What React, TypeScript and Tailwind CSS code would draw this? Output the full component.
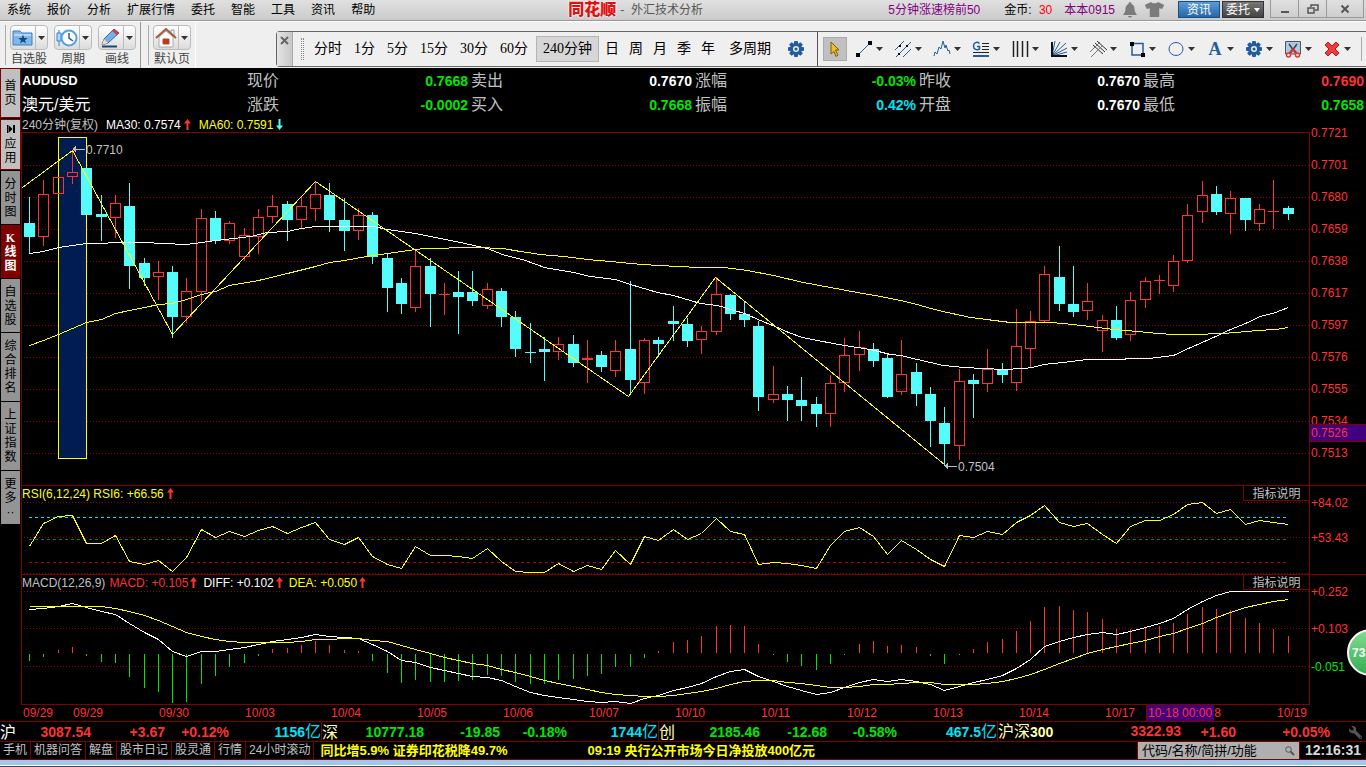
import type { ReactNode } from 'react';
import { FaTshirt, FaWrench } from 'react-icons/fa';

type Candle = [up: number, high: number, top: number, bottom: number, low: number];

// one entry per 4h bar
const candles: Candle[] = [
  [0, 64, 90, 104, 121], [1, 47, 61, 104, 113], [1, 44, 44, 61, 61], [1, 17, 39, 44, 51],
  [0, 35, 35, 82, 82], [0, 62, 81, 84, 108], [1, 62, 70, 85, 105], [0, 50, 73, 133, 156],
  [0, 125, 130, 145, 153], [1, 128, 139, 144, 167], [0, 133, 139, 184, 205], [1, 145, 158, 184, 190],
  [1, 76, 85, 159, 170], [0, 78, 85, 108, 111], [1, 88, 90, 108, 111], [1, 95, 102, 124, 128],
  [1, 76, 84, 104, 121], [1, 62, 73, 84, 90], [0, 68, 71, 87, 108], [1, 64, 73, 87, 95],
  [1, 48, 61, 76, 88], [0, 50, 62, 87, 99], [0, 65, 87, 98, 118], [1, 75, 82, 98, 107],
  [0, 79, 82, 124, 131], [0, 121, 125, 155, 179], [0, 145, 150, 171, 181], [1, 118, 133, 175, 179],
  [0, 125, 133, 161, 194], [1, 150, 161, 162, 182], [0, 138, 159, 164, 201], [0, 138, 159, 168, 173],
  [1, 150, 156, 173, 176], [0, 155, 158, 184, 194], [0, 178, 184, 216, 224], [0, 190, 219, 220, 230],
  [0, 204, 216, 219, 248], [1, 204, 211, 219, 227], [0, 202, 211, 230, 234], [1, 207, 225, 227, 250],
  [0, 218, 222, 234, 239], [1, 207, 218, 238, 244], [0, 148, 216, 247, 262], [1, 205, 207, 250, 261],
  [0, 204, 207, 211, 224], [0, 173, 188, 191, 208], [0, 185, 191, 208, 214], [1, 193, 198, 207, 221],
  [1, 144, 161, 199, 202], [0, 161, 162, 181, 187], [0, 168, 181, 187, 194], [0, 188, 193, 264, 278],
  [1, 233, 261, 267, 270], [0, 253, 261, 267, 288], [0, 244, 267, 273, 288], [0, 264, 271, 281, 294],
  [1, 242, 250, 281, 294], [1, 205, 222, 250, 259], [1, 198, 214, 222, 238], [0, 210, 216, 228, 234],
  [0, 221, 225, 264, 265], [1, 207, 241, 259, 262], [0, 230, 239, 261, 273], [0, 254, 261, 288, 314],
  [0, 274, 290, 311, 333], [1, 236, 248, 313, 327], [0, 241, 247, 251, 285], [1, 216, 236, 251, 259],
  [0, 230, 236, 242, 250], [1, 176, 213, 250, 258], [1, 178, 188, 216, 234], [1, 133, 141, 188, 189],
  [0, 113, 144, 171, 178], [0, 133, 171, 179, 184], [1, 150, 168, 178, 187], [1, 182, 187, 198, 219],
  [0, 173, 187, 205, 207], [1, 159, 167, 202, 208], [1, 144, 148, 167, 175], [1, 142, 147, 148, 161],
  [1, 122, 128, 153, 159], [1, 71, 82, 128, 130], [1, 48, 62, 79, 90], [0, 53, 61, 79, 82],
  [1, 58, 65, 81, 101], [0, 65, 65, 87, 98], [1, 71, 76, 91, 98], [1, 47, 78, 79, 96], [0, 73, 75, 81, 87],
];

const ma30 =
  '7,120 21,118 36,114 50,112 64,110 79,110 93,109 122,109 141,110 164,111 179,109 193,107 211,105 228,103 245,99 265,98 279,95 293,93 351,93 365,96 393,100 418,105 438,109 465,115 480,121 503,127 522,134 551,139 568,143 593,146 608,151 635,159 651,162 678,170 695,172 722,180 738,187 755,194 766,199 780,204 795,207 811,210 828,213 848,216 868,221 878,222 895,226 921,232 941,234 961,235 981,236 1001,235 1010,234 1021,231 1041,229 1065,226 1100,226 1106,225 1126,225 1151,222 1166,215 1191,204 1208,196 1223,190 1238,183 1253,179 1266,174';
const ma60 =
  '7,212 21,207 36,201 50,195 64,189 79,186 93,180 107,177 122,174 136,171 150,170 164,166 179,161 193,158 207,152 236,147 265,140 293,133 307,129 322,127 350,122 365,120 379,118 401,115 418,115 435,114 455,114 480,115 498,118 518,121 541,123 565,126 588,128 608,130 635,132 658,133 675,134 701,134 725,137 751,142 781,149 808,154 835,159 858,163 878,167 895,171 908,175 925,179 948,184 988,189 1028,189 1041,190 1068,193 1091,196 1115,198 1135,200 1151,201 1171,201 1201,200 1225,198 1235,197 1253,196 1266,194';
const zigzag = '0,54 50,17 150,201 293,48 606,263 693,144 922,331';

const rsi = [
  60, 37, 30, 29, 57, 57, 49, 75, 78, 74, 85, 71, 43, 51, 45, 50, 44, 40, 47, 41, 36, 53, 58, 51, 70, 78, 82, 60, 69, 69,
  70, 72, 62, 75, 85, 86, 86, 77, 85, 79, 83, 64, 78, 50, 54, 43, 53, 47, 32, 45, 48, 78, 76, 77, 79, 82, 59, 45, 41, 50,
  68, 54, 63, 73, 80, 49, 51, 45, 48, 36, 29, 19, 36, 40, 37, 48, 57, 40, 34, 34, 28, 18, 16, 27, 23, 38, 34, 36, 38,
];
const macd = [
  86, 82, 75, 72, 81, 87, 88, 102, 113, 117, 128, 127, 109, 101, 92, 88, 81, 74, 73, 70, 66, 70, 75, 76, 86, 98, 108, 105,
  107, 107, 106, 105, 100, 101, 107, 109, 109, 105, 104, 101, 99, 92, 92, 83, 76, 67, 65, 61, 51, 50, 51, 69, 80, 87, 91,
  95, 89, 80, 69, 66, 71, 70, 72, 81, 89, 80, 74, 67, 64, 56, 46, 32, 31, 35, 37, 44, 54, 54, 52, 51, 48, 39, 32, 34, 35,
  43, 48, 54, 61,
];
const diff = [
  34, 33, 31, 28, 32, 36, 39, 48, 57, 64, 76, 81, 76, 76, 74, 72, 69, 66, 64, 62, 59, 61, 62, 63, 69, 76, 85, 87, 92, 95,
  98, 101, 102, 105, 111, 117, 120, 122, 124, 126, 127, 126, 128, 123, 120, 115, 112, 108, 101, 96, 94, 101, 106, 111,
  115, 119, 117, 112, 107, 104, 106, 104, 106, 109, 115, 111, 107, 104, 100, 93, 84, 71, 66, 62, 59, 57, 59, 56, 52, 48,
  43, 34, 26, 20, 16, 16, 16, 16, 16,
];
const dea = [
  31, 31, 31, 31, 31, 31, 33, 36, 40, 45, 51, 57, 61, 64, 66, 67, 67, 67, 67, 66, 64, 64, 63, 63, 65, 66, 70, 74, 78, 82,
  85, 88, 90, 94, 97, 101, 105, 108, 111, 114, 117, 119, 120, 121, 121, 120, 118, 116, 113, 109, 106, 105, 105, 107, 108,
  110, 112, 112, 111, 109, 109, 108, 107, 107, 109, 109, 109, 108, 106, 103, 99, 94, 88, 83, 78, 74, 71, 68, 65, 61, 58,
  53, 48, 42, 37, 32, 29, 26, 24,
];

const barX = (i: number) => Math.floor((76 + 143 * i) / 10);
const toPoints = (ys: number[]) => ys.map((y, i) => `${barX(i)},${y}`).join(' ');

const menus = ['系统', '报价', '分析', '扩展行情', '委托', '智能', '工具', '资讯', '帮助'];
const minutes = ['分时', '1分', '5分', '15分', '30分', '60分'];
const longPeriods = ['日', '周', '月', '季', '年'];
const prices = ['0.7721', '0.7701', '0.7680', '0.7659', '0.7638', '0.7617', '0.7597', '0.7576', '0.7555', '0.7534', '0.7513'];
const dates = ['09/29', '09/29', '09/30', '10/03', '10/04', '10/05', '10/06', '10/07', '10/10', '10/11', '10/12', '10/13', '10/14', '10/17', '10/18', '10/19'];

const sideTabs = [
  { text: '分时图', cls: 'h-[53px] bg-[#949494] text-black' },
  { text: 'K线图', cls: "h-[53px] bg-[#800000] font-['Liberation_Serif','Noto_Sans_CJK_SC',serif] font-bold text-white" },
  { text: '自选股', cls: 'h-[53px] bg-[#949494] text-black' },
  { text: '综合排名', cls: 'h-[68px] bg-[#949494] text-black' },
  { text: '上证指数', cls: 'h-[68px] bg-[#949494] text-black' },
  { text: '更多··', cls: 'h-[53px] bg-[#949494] text-black' },
];

const quotes = [
  [
    { label: '现价', value: '0.7668', cls: 'text-[#00e600]' },
    { label: '卖出', value: '0.7670', cls: 'text-white' },
    { label: '涨幅', value: '-0.03%', cls: 'text-[#00e600]' },
    { label: '昨收', value: '0.7670', cls: 'text-white' },
    { label: '最高', value: '0.7690', cls: 'text-[#ff3232]' },
  ],
  [
    { label: '涨跌', value: '-0.0002', cls: 'text-[#00e600]' },
    { label: '买入', value: '0.7668', cls: 'text-[#00e600]' },
    { label: '振幅', value: '0.42%', cls: 'text-[#02e2f4]' },
    { label: '开盘', value: '0.7670', cls: 'text-white' },
    { label: '最低', value: '0.7658', cls: 'text-[#00e600]' },
  ],
];

const bottomTabs = ['手机', '机器问答', '解盘', '股市日记', '股灵通', '行情', '24小时滚动'];

function Arrow({ down }: { down?: boolean }) {
  return (
    <svg width="7" height="11" viewBox="0 0 7 11" className={down ? 'rotate-180' : ''} aria-hidden="true">
      <path d="M3.5 0 L7 4.5 H4.5 V11 H2.5 V4.5 H0 Z" fill={down ? '#54fcfc' : '#ff3232'} />
    </svg>
  );
}

function Caret() {
  return (
    <svg width="7" height="4" viewBox="0 0 7 4" aria-hidden="true">
      <path d="M0 0 H7 L3.5 4 Z" fill="#333" />
    </svg>
  );
}

function Gear() {
  return (
    <svg width="18" height="18" viewBox="-9 -9 18 18" aria-hidden="true">
      <g fill="#235c9c">
        {[0, 45, 90, 135].map((a) => (
          <rect key={a} x="-2" y="-8" width="4" height="16" rx="1" transform={`rotate(${a})`} />
        ))}
        <circle r="6" />
      </g>
      <circle r="3" fill="#f0f0f0" />
      <circle r="1.6" fill="#235c9c" />
    </svg>
  );
}

const blue = '#235c9c';

const tools: { name: string; icon: ReactNode }[] = [
  {
    name: '线段',
    icon: (
      <>
        <path d="M3 15 L15 3" stroke={blue} />
        <path d="M1 13 h4 v4 h-4z M13 1 h4 v4 h-4z" fill="#000" stroke="none" />
      </>
    ),
  },
  {
    name: '平行线',
    icon: (
      <>
        <path d="M1 10 L10 1 M2 17 L17 2 M9 17 L17 9" stroke={blue} />
        <path d="M5 5 h2 v2 h-2z M4 13 h2 v2 h-2z M12 5 h2 v2 h-2z" fill="#000" stroke="none" />
      </>
    ),
  },
  { name: '波浪线', icon: <path d="M1 16 L2 12 L4 14 L6 7 L8 9 L10 1 L12 8 L13 5 L15 11 L16 10 L17 14" stroke={blue} /> },
  {
    name: '黄金分割',
    icon: (
      <>
        <path d="M10 3.500 H17 M10 6.500 H17 M10 9.500 H17 M1 12.500 H17" stroke="#222" />
        <path d="M1 16 H17" stroke={blue} strokeWidth="2" />
        <path d="M7.500 3.500 C5 1 1.500 3 1.500 6 C1.500 9.500 5 10.500 7.500 9 V6.500 H5" stroke={blue} strokeWidth="1.500" />
      </>
    ),
  },
  { name: '周期线', icon: <path d="M2.500 1 V17 M6.500 1 V17 M11.500 1 V17 M16.500 1 V17" stroke="#222" strokeWidth="1.500" /> },
  {
    name: '扇形线',
    icon: (
      <>
        <path d="M2 16 L5 1 M2 16 L10 2 M2 16 L16 3 M2 16 L17 8 M2 16 L17 12" stroke={blue} />
        <path d="M2 2 V16 H17" stroke="#111" strokeWidth="2" />
      </>
    ),
  },
  {
    name: '通道线',
    icon: (
      <>
        <path d="M4 5 L14 14 M6 3 L16 12 M8 1 L18 10" stroke="#333" />
        <path d="M1 12 L11 2 M2 17 L14 5" stroke="#777" />
      </>
    ),
  },
  {
    name: '矩形',
    icon: (
      <>
        <path d="M4 3.500 H15 V15 H4 Z" stroke={blue} strokeWidth="1.500" />
        <path d="M2 2 h4 v4 h-4z M13 13 h4 v4 h-4z" fill="#000" stroke="none" />
      </>
    ),
  },
  { name: '椭圆', icon: <ellipse cx="9" cy="9" rx="7" ry="6.500" stroke={blue} /> },
  { name: '文字', icon: null },
  { name: '设置', icon: null },
  {
    name: '剪切',
    icon: (
      <>
        <path d="M1.500 1.500 H16.500 V14 H1.500 Z" fill="#a9cbe8" stroke="#555" />
        <path d="M5 4 L11.500 13 M13 4 L6.500 13" stroke="#444" strokeWidth="1.500" />
        <path d="M9 9 L5.500 13 M9 9 L12.500 13" stroke="#dd3333" strokeWidth="2" />
        <circle cx="4.500" cy="15" r="2" fill="#efefef" stroke="#dd3333" strokeWidth="1.500" />
        <circle cx="13.500" cy="15" r="2" fill="#efefef" stroke="#dd3333" strokeWidth="1.500" />
      </>
    ),
  },
  {
    name: '删除',
    icon: <path d="M2 5 L5 2 L9 6 L13 2 L16 5 L12 9 L16 13 L13 16 L9 12 L5 16 L2 13 L6 9 Z" fill="#f03c3c" stroke="#b81818" />,
  },
];

function ToolIcon({ name, icon }: { name: string; icon: ReactNode }) {
  if (name === '设置') return <Gear />;
  if (name === '文字') return <span className="font-['Liberation_Serif',serif] text-lg leading-none font-bold text-[#235c9c]">A</span>;
  return (
    <svg width="18" height="18" viewBox="0 0 18 18" fill="none" aria-hidden="true">
      {icon}
    </svg>
  );
}

function QuickButton({ label, children }: { label: string; children: ReactNode }) {
  return (
    <button type="button" className="flex w-[38px] flex-col items-center text-xs leading-[18px] text-[#444]">
      <span className="flex h-[25px] w-full rounded-sm border border-[#bbb] bg-linear-to-b from-white to-[#dcdcdc]">
        <span className="flex flex-1 items-center justify-center">{children}</span>
        <span className="flex w-3 items-center justify-center border-l border-[#bbb]">
          <Caret />
        </span>
      </span>
      <span className="whitespace-nowrap">{label}</span>
    </button>
  );
}

function TitleBar() {
  return (
    <header className="flex h-[21px] items-start border-b border-[#989898] bg-linear-to-b from-[#e0e0e0] to-[#cbcbcb] text-xs leading-5 whitespace-nowrap">
      <nav className="flex gap-4 pl-[7px]">
        {menus.map((m) => (
          <button type="button" key={m}>{m}</button>
        ))}
      </nav>
      <h1 className="flex flex-1 justify-center gap-1 pl-2 text-[#555]">
        <span className="text-base leading-5 font-black text-[#e01010] [text-shadow:0_0_2px_#fff,0_0_2px_#fff,0_0_1px_#fff]">同花顺</span>
        <span>- &nbsp;外汇技术分析</span>
      </h1>
      <div className="flex items-start">
        <a href="#rank" className="mr-6 text-[#800080]">5分钟涨速榜前50</a>
        <span className="mr-3">金币: <span className="ml-1 text-[#ff0000]">30</span></span>
        <a href="#user" className="mr-2 text-[#800080]">本本0915</a>
        <button type="button" aria-label="消息" className="mt-0.5 mr-2 text-[#777]">
          <svg width="14" height="16" viewBox="0 0 14 16" aria-hidden="true">
            <path d="M7 0 C8 0 8.500 1 8.500 2 C11 3 11.500 5 11.500 7 C11.500 10 13 11 14 13 H0 C1 11 2.500 10 2.500 7 C2.500 5 3 3 5.500 2 C5.500 1 6 0 7 0 Z M5 14 H9 C8.500 16 5.500 16 5 14 Z" fill="#7b7b7b" />
          </svg>
        </button>
        <button type="button" aria-label="皮肤" className="mr-3.5 text-[#7b7b7b]"><FaTshirt size={19} /></button>
        <button type="button" className="mt-px mr-0.5 h-[17px] w-[42px] border border-[#1a4d80] bg-linear-to-b from-[#5b9bd8] to-[#2568a8] text-xs leading-4 text-white">资讯</button>
        <button type="button" className="mt-px mr-1.5 flex h-[17px] w-[42px] items-center justify-center gap-1 border border-[#333] bg-linear-to-b from-[#777] to-[#444] text-xs text-white">
          委托
          <svg width="6" height="4" viewBox="0 0 6 4" aria-hidden="true"><path d="M0 0 H6 L3 4 Z" fill="#fff" /></svg>
        </button>
        <div className="mr-0.5 flex h-[18px] border border-t-0 border-[#999] text-[#555]">
          <button type="button" aria-label="最小化" className="flex w-7 items-center justify-center border-r border-[#999]">
            <svg width="10" height="10" viewBox="0 0 10 10" aria-hidden="true"><path d="M1 8 H9" stroke="#555" strokeWidth="2" /></svg>
          </button>
          <button type="button" aria-label="还原" className="flex w-7 items-center justify-center border-r border-[#999]">
            <svg width="12" height="10" viewBox="0 0 12 10" fill="none" stroke="#555" aria-hidden="true">
              <path d="M1 4 H7 V9 H1 Z M4 3 V1 H11 V6 H8" strokeWidth="1.500" />
            </svg>
          </button>
          <button type="button" aria-label="关闭" className="flex w-9 items-center justify-center">
            <svg width="10" height="10" viewBox="0 0 10 10" aria-hidden="true"><path d="M1.500 1.500 L8.500 8.500 M8.500 1.500 L1.500 8.500" stroke="#555" strokeWidth="2" /></svg>
          </button>
        </div>
      </div>
    </header>
  );
}

function Ribbon() {
  return (
    <div className="flex h-[47px] items-start border-t border-white bg-[#efefef]">
      <div className="flex h-full gap-1.5 border-r border-[#999] pt-[3px] pr-1 pl-1">
        <span className="mr-[-2px] h-10 w-0.5 border-r border-[#aaa]" />
        <QuickButton label="自选股">
          <svg width="22" height="18" viewBox="0 0 22 18" aria-hidden="true">
            <path d="M1 16 V2 H8 L10 4 H20 V16 Z" fill="#7fb7ec" stroke="#3d7fc0" />
            <path d="M2 6 H19" stroke="#c8e2f8" strokeWidth="1.500" />
            <path d="M11 5.500 L12.300 9 H15.800 L13 11.200 L14 14.600 L11 12.500 L8 14.600 L9 11.200 L6.200 9 H9.700 Z" fill="#174a7c" />
          </svg>
        </QuickButton>
        <QuickButton label="周期">
          <svg width="22" height="20" viewBox="0 0 22 20" fill="none" aria-hidden="true">
            <path d="M3 2 V18" stroke="#3288c8" />
            <path d="M1 5 H5 V13 H1 Z" fill="#a8dcf8" stroke="#3288c8" />
            <circle cx="13" cy="10" r="7.500" fill="#fff" stroke="#5a9fdc" strokeWidth="2" />
            <path d="M13 5 V10 L17 13" stroke="#275f96" strokeWidth="1.500" />
          </svg>
        </QuickButton>
        <QuickButton label="画线">
          <svg width="22" height="20" viewBox="0 0 22 20" aria-hidden="true">
            <path d="M2 18.500 H17" stroke="#16497c" strokeWidth="2" />
            <path d="M2 17 L4 11 L14 1 L19 5 L8 15 Z" fill="#76afe8" stroke="#386b9e" />
            <path d="M14 1 L19 5 L17 7 L12 3 Z" fill="#d83a3a" />
            <path d="M2 17 L4 11 L8 15 Z" fill="#f4dcae" />
          </svg>
        </QuickButton>
      </div>
      <div className="flex h-full gap-1.5 border-r border-white pt-[3px] pr-1 pl-1.5">
        <span className="mr-[-2px] h-10 w-0.5 border-r border-[#aaa]" />
        <QuickButton label="默认页">
          <svg width="22" height="20" viewBox="0 0 22 20" aria-hidden="true">
            <path d="M16 2 H19 V8 H16 Z" fill="#fff" stroke="#999" />
            <path d="M4 9 L11 3 L18 9 V19 H4 Z" fill="#fff" stroke="#aaa" />
            <path d="M1 10 L11 1 L21 10" fill="none" stroke="#a4593c" strokeWidth="2" />
            <path d="M8 11 H14 V16 H8 Z" fill="#d82a18" stroke="#8a5b3a" />
          </svg>
        </QuickButton>
      </div>
      <div className="mt-[9px] ml-20 flex h-9 flex-1 items-stretch rounded-l-sm border border-r-0 border-[#666]">
        <button type="button" aria-label="关闭工具栏" className="flex w-4 justify-center border-r border-[#aaa] bg-linear-to-r from-[#e4e4e4] to-[#c8c8c8] pt-1">
          <svg width="9" height="9" viewBox="0 0 9 9" aria-hidden="true"><path d="M1 1 L8 8 M8 1 L1 8" stroke="#666" strokeWidth="2" /></svg>
        </button>
        <span className="my-1.5 ml-2 w-[3px] border-x border-dotted border-[#888]" />
        <div className="flex flex-1 items-center pr-3 pl-2.5 font-['Liberation_Serif','Noto_Sans_CJK_SC',sans-serif] text-sm whitespace-nowrap">
          <div className="flex gap-3">
            {minutes.map((m) => (
              <button type="button" key={m}>{m}</button>
            ))}
          </div>
          <button type="button" className="mr-1.5 ml-2 h-[26px] border border-[#b4b4b4] bg-[#d6d6d6] px-1.5">240分钟</button>
          <div className="flex gap-2.5">
            {longPeriods.map((m) => (
              <button type="button" key={m}>{m}</button>
            ))}
          </div>
          <button type="button" className="ml-3.5">多周期</button>
          <button type="button" aria-label="周期设置" className="ml-auto"><Gear /></button>
        </div>
        <div className="flex items-center border-l border-[#555] pl-[5px]">
          <button type="button" aria-label="选择" className="mr-[5px] flex h-6 w-6 items-center justify-center border border-[#aaa] bg-[#c0c0c0]">
            <svg width="12" height="17" viewBox="0 0 12 17" aria-hidden="true">
              <path d="M2 1 L10 9 H6.500 L9 14 L7 15.500 L5 10.500 L2 13 Z" fill="#f0c020" stroke="#7a5a10" />
            </svg>
          </button>
          {tools.map((t) => (
            <button type="button" key={t.name} aria-label={t.name} className="flex w-[39px] items-center">
              <span className="flex w-6 justify-center"><ToolIcon name={t.name} icon={t.icon} /></span>
              <Caret />
            </button>
          ))}
          <span className="mr-1 ml-0.5 h-6 w-px bg-[#aaa]" />
        </div>
      </div>
    </div>
  );
}

function SideBar() {
  return (
    <aside className="flex w-[21px] shrink-0 flex-col gap-px text-xs leading-[14px]">
      <button type="button" className="flex h-[50px] items-center justify-center border border-[#800000] bg-[#c0c0c0] px-0.5 text-black">
        <span className="w-3 break-all">首页</span>
      </button>
      <button type="button" className="flex h-[51px] flex-col items-center justify-center border border-[#800000] bg-[#c0c0c0] text-black">
        <svg width="8" height="8" viewBox="0 0 8 8" className="mb-1" aria-hidden="true">
          <path d="M0 0 H1 V8 H0 Z M1.500 0 L5.500 4 L1.500 8 Z M6 0 H8 V8 H6 Z" />
        </svg>
        <span className="w-3 break-all">应用</span>
      </button>
      {sideTabs.map((t) => (
        <button type="button" key={t.text} className={`mr-px ml-px flex items-center justify-center overflow-hidden text-center ${t.cls}`}>
          <span className="w-3 break-all">{t.text}</span>
        </button>
      ))}
    </aside>
  );
}

function QuoteHeader() {
  return (
    <div className="pt-px pl-px text-base">
      {quotes.map((row, i) => (
        <dl key={i} className="grid h-6 grid-cols-6 items-center leading-6">
          <div className={i === 0 ? 'text-[13px] leading-6 font-bold text-white' : 'text-base leading-6 text-white'}>
            {i === 0 ? 'AUDUSD' : '澳元/美元'}
          </div>
          {row.map((q) => (
            <div key={q.label} className="flex items-center justify-between pr-0.5 pl-px">
              <dt className="text-[#c0c0c0]">{q.label}</dt>
              <dd className={`text-sm leading-6 font-bold ${q.cls}`}>{q.value}</dd>
            </div>
          ))}
        </dl>
      ))}
    </div>
  );
}

function Grid({ ys }: { ys: number[] }) {
  return (
    <>
      {ys.map((y) => (
        <path key={y} d={`M2 ${y + 0.5} H1287`} stroke="#900000" strokeDasharray="1 2" />
      ))}
    </>
  );
}

function PriceChart() {
  return (
    <svg viewBox="0 0 1287 352" preserveAspectRatio="none" className="block h-full w-full" shapeRendering="crispEdges" role="img" aria-label="AUDUSD K线图">
      <Grid ys={[32, 64, 96, 128, 160, 192, 224, 256, 288, 320]} />
      <rect x="36.500" y="4.500" width="28" height="321" fill="#001c50" stroke="#ffff00" />
      {candles.map(([up, high, top, bottom, low], i) => {
        const x = barX(i);
        const color = up ? '#ff3232' : '#54fcfc';
        return (
          <g key={i} fill={color}>
            <rect x={x} y={high} width="1" height={top - high} />
            <rect x={x} y={bottom} width="1" height={low - bottom} />
            {up && bottom - top > 2 ? (
              <rect x={x - 4.5} y={top + 0.5} width="10" height={bottom - top - 1} fill="none" stroke={color} />
            ) : (
              <rect x={x - 5} y={top} width="11" height={bottom - top} />
            )}
          </g>
        );
      })}
      <g fill="none" transform="translate(0.5 0.5)">
        <polyline points={ma30} stroke="#fff" />
        <polyline points={ma60} stroke="#ffff00" />
        <polyline points={zigzag} stroke="#ffff00" />
      </g>
      <g fill="#c0c0c0" fontSize="12">
        <path d="M50 16 L54 13 V16 H63 V17 H54 V19 Z" />
        <text x="64" y="21">0.7710</text>
        <path d="M922 333 L926 330 V333 H935 V334 H926 V336 Z" />
        <text x="936" y="338">0.7504</text>
      </g>
    </svg>
  );
}

function RsiChart() {
  return (
    <svg viewBox="0 0 1287 88" preserveAspectRatio="none" className="block h-full w-full" shapeRendering="crispEdges" role="img" aria-label="RSI">
      <Grid ys={[16, 51, 87]} />
      <g strokeDasharray="3 3">
        <path d="M7 31.500 H1266" stroke="#02e2f4" />
        <path d="M7 53.500 H1266" stroke="#008050" />
        <path d="M7 76.500 H1266" stroke="#c00000" />
      </g>
      <polyline points={toPoints(rsi)} fill="none" stroke="#ffff00" transform="translate(0.5 0.5)" />
    </svg>
  );
}

function MacdChart() {
  return (
    <svg viewBox="0 0 1287 129" preserveAspectRatio="none" className="block h-full w-full" shapeRendering="crispEdges" role="img" aria-label="MACD">
      <Grid ys={[16, 53, 91]} />
      {macd.map((y, i) => (
        <rect key={i} x={barX(i)} y={Math.min(y, 79)} width="1" height={y < 79 ? 78 - y : y - 79} fill={y < 79 ? '#ff3232' : '#00e600'} />
      ))}
      <g fill="none" transform="translate(0.5 0.5)">
        <polyline points={toPoints(diff)} stroke="#fff" />
        <polyline points={toPoints(dea)} stroke="#ffff00" />
      </g>
    </svg>
  );
}

function HelpLink() {
  return (
    <a href="#help" className="absolute top-0 right-0 h-[15px] w-[66px] border-b border-l border-[#800000] bg-black text-center text-xs leading-4 text-[#c0c0c0]">
      指标说明
    </a>
  );
}

const panel = 'relative min-w-0 flex-1 border-x border-[#800000]';
const axis = 'relative w-14 shrink-0 pl-px text-[#ff3232]';

function Charts() {
  return (
    <div className="text-xs">
      <div className="flex h-[15px] items-center gap-2 pl-px leading-[14px]">
        <span className="text-[#c0c0c0]">240分钟(复权)</span>
        <span className="flex items-center gap-[3px] text-white">MA30: 0.7574 <Arrow /></span>
        <span className="flex items-center gap-[3px] text-[#ffff00]">MA60: 0.7591 <Arrow down /></span>
      </div>
      <div className="flex h-[353px]">
        <div className={`${panel} border-t`}><PriceChart /></div>
        <div className={axis}>
          <ul className="-mt-[15px]">
            {prices.map((p) => (
              <li key={p} className="flex h-8 items-center">{p}</li>
            ))}
          </ul>
          <span className="absolute top-[292px] right-0 left-0 h-[18px] border-y border-[#800000] bg-[#400080] pl-px leading-4">0.7526</span>
        </div>
      </div>
      <div className="flex h-[89px] border-t border-[#800000]">
        <div className={panel}>
          <RsiChart />
          <div className="absolute top-0 left-0 flex h-[15px] items-center gap-[3px] text-[#ffff00]">RSI(6,12,24) RSI6: +66.56 <Arrow /></div>
          <HelpLink />
        </div>
        <ul className={axis}>
          <li className="flex h-[34px] items-center">+84.02</li>
          <li className="flex h-[35px] items-center">+53.43</li>
        </ul>
      </div>
      <div className="flex h-[131px] border-t border-[#800000]">
        <div className={`${panel} border-b`}>
          <MacdChart />
          <div className="absolute top-0 left-0 flex h-[15px] items-center gap-1.5">
            <span className="flex items-center gap-0.5 text-[#ff3232]"><span className="mr-0.5 text-[#c0c0c0]">MACD(12,26,9)</span>MACD: +0.105 <Arrow /></span>
            <span className="flex items-center gap-0.5 text-white">DIFF: +0.102 <Arrow /></span>
            <span className="flex items-center gap-0.5 text-[#ffff00]">DEA: +0.050 <Arrow /></span>
          </div>
          <HelpLink />
        </div>
        <ul className={axis}>
          <li className="flex h-[34px] items-center">+0.252</li>
          <li className="flex h-10 items-center">+0.103</li>
          <li className="flex h-9 items-center text-[#00e600]">-0.051</li>
        </ul>
      </div>
      <div className="relative grid h-4 grid-cols-[50fr_repeat(14,86fr)_89fr] pl-0.5 leading-4 text-[#ff3232]">
        {dates.map((d, i) => (
          <span key={i}>{d}</span>
        ))}
        <span className="absolute top-0 right-[152px] h-4 w-[68px] border-l border-[#800000] bg-[#400080] pl-px leading-4 whitespace-nowrap">10-18 00:00</span>
      </div>
    </div>
  );
}

function IndexRow() {
  return (
    <section className="grid h-5 grid-cols-[91fr_74fr_64fr_93fr_102fr_76fr_67fr_92fr_101fr_67fr_70fr_101fr_183fr_55fr_94fr_36fr] items-center border-t border-[#800000] text-right text-sm leading-[19px] font-bold whitespace-nowrap text-[#ff3232]">
      <span className="flex justify-between"><span className="text-base leading-[19px] font-normal text-white">沪</span>3087.54</span>
      <span>+3.67</span>
      <span>+0.12%</span>
      <span className="border-r border-[#800000] text-[#02e2f4]">1156<span className="text-base leading-[19px] font-normal">亿</span></span>
      <span className="flex justify-between text-[#00e600]"><span className="text-base leading-[19px] font-normal text-[#ffffb0]">深</span>10777.18</span>
      <span className="text-[#00e600]">-19.85</span>
      <span className="text-[#00e600]">-0.18%</span>
      <span className="border-r border-[#800000] text-[#02e2f4]">1744<span className="text-base leading-[19px] font-normal">亿</span></span>
      <span className="flex justify-between text-[#00e600]"><span className="text-base leading-[19px] font-normal text-[#ffffb0]">创</span>2185.46</span>
      <span className="text-[#00e600]">-12.68</span>
      <span className="text-[#00e600]">-0.58%</span>
      <span className="border-r border-[#800000] text-[#02e2f4]">467.5<span className="text-base leading-[19px] font-normal">亿</span></span>
      <span className="flex justify-between"><span className="text-[#ffffb0]"><span className="text-base leading-[19px] font-normal">沪深</span>300</span>3322.93</span>
      <span>+1.60</span>
      <span>+0.05%</span>
      <button type="button" aria-label="设置" className="flex justify-end pr-1 text-[#555]"><FaWrench size={13} className="-scale-x-100" /></button>
    </section>
  );
}

function StatusBar() {
  return (
    <footer className="flex h-[19px] border-y border-[#800000] text-xs leading-[17px] whitespace-nowrap text-[#c0c0c0]">
      {bottomTabs.map((t) => (
        <button type="button" key={t} className="border-r border-[#800000] px-[3px]">{t}</button>
      ))}
      <div className="flex flex-1 gap-20 overflow-hidden pl-1.5 text-[13px] leading-[17px] font-bold text-[#ffff00]">
        <span>同比增5.9% 证券印花税降49.7%</span>
        <span>09:19 央行公开市场今日净投放400亿元</span>
      </div>
      <label className="flex w-[163px] items-center border-x border-[#800000] bg-[#b0b0b0] px-1">
        <input aria-label="代码/名称/简拼/功能" placeholder="代码/名称/简拼/功能" className="h-4 min-w-0 flex-1 text-[13px] text-black outline-none placeholder:text-black" />
        <svg width="10" height="10" viewBox="0 0 10 10" fill="none" stroke="#555" aria-hidden="true">
          <circle cx="3.500" cy="3.500" r="2.800" />
          <path d="M5.500 5.500 L9 9" strokeWidth="2" />
        </svg>
      </label>
      <time className="px-[5px] text-sm leading-[17px] font-bold text-[#d8d8d8]">12:16:31</time>
    </footer>
  );
}

export default function App() {
  return (
    <div className="relative min-w-[1200px] overflow-hidden bg-black font-['Liberation_Sans','Noto_Sans_CJK_SC',sans-serif] text-black">
      <TitleBar />
      <Ribbon />
      <div className="flex">
        <SideBar />
        <main className="min-w-0 flex-1">
          <QuoteHeader />
          <Charts />
        </main>
      </div>
      <IndexRow />
      <StatusBar />
      <div className="h-[7px] border-b border-[#3c4854] bg-linear-to-b from-[#a4c6ea] from-80% to-white to-85%" />
      <button type="button" className="absolute top-[629px] -right-7 h-[47px] w-[47px] rounded-full border-2 border-white bg-linear-to-b from-[#7fdc8f] to-[#2fae52] pl-[3px] text-left text-xs font-bold text-white">
        73
      </button>
    </div>
  );
}
